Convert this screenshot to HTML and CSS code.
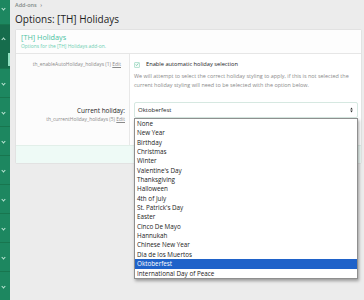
FILE: index.html
```html
<!DOCTYPE html>
<html>
<head>
<meta charset="utf-8">
<link rel="stylesheet" href="styles.css">
</head>
<body>
<div class="app">
  <nav class="side">
    <div class="nav-item first"><span class="chev down"></span></div>
    <div class="nav-item active"><span class="chev up"></span><span class="mark"></span></div>
    <div class="nav-item"><span class="chev down"></span></div>
    <div class="nav-item"><span class="chev down"></span></div>
    <div class="nav-item"><span class="chev down"></span></div>
    <div class="nav-item"><span class="chev down"></span></div>
    <div class="nav-item"><span class="chev down"></span></div>
    <div class="nav-item"><span class="chev down"></span></div>
    <div class="nav-item"><span class="chev down"></span></div>
    <div class="nav-item"><span class="chev down"></span></div>
  </nav>
  <main class="main">
    <div class="crumb">Add-ons <span class="sep">›</span></div>
    <h1 class="title">Options: [TH] Holidays</h1>
    <section class="panel">
      <header class="panel-head">
        <h2 class="panel-title">[TH] Holidays</h2>
        <p class="panel-desc">Options for the [TH] Holidays add-on.</p>
      </header>
      <div class="row row-first">
        <div class="lab">
          <span class="meta">th_enableAutoHoliday_holidays (1) <span class="edit">Edit</span></span>
        </div>
        <div class="ctrl">
          <div class="check-line">
            <span class="box"><svg viewBox="0 0 8 8" width="6" height="6"><path d="M1.2 4.2 L3.2 6 L6.8 1.8" fill="none" stroke="#4fb894" stroke-width="1.2"/></svg></span>
            <span class="check-label">Enable automatic holiday selection</span>
          </div>
          <p class="hint">We will attempt to select the correct holiday styling to apply, if this is not selected the current holiday styling will need to be selected with the option below.</p>
        </div>
      </div>
      <div class="row row-second">
        <div class="lab">
          <span class="label">Current holiday:</span>
          <span class="meta">th_currentHoliday_holidays (5) <span class="edit">Edit</span></span>
        </div>
        <div class="ctrl">
          <div class="select">
            <span>Oktoberfest</span>
            <svg class="arrows" viewBox="0 0 4 8" width="3" height="6"><path d="M0.3 3.2 L2 0.6 L3.7 3.2 Z M0.3 4.8 L2 7.4 L3.7 4.8 Z" fill="#333"/></svg>
          </div>
          <ul class="dropdown">
            <li>None</li>
            <li>New Year</li>
            <li>Birthday</li>
            <li>Christmas</li>
            <li>Winter</li>
            <li>Valentine's Day</li>
            <li>Thanksgiving</li>
            <li>Halloween</li>
            <li>4th of July</li>
            <li>St. Patrick's Day</li>
            <li>Easter</li>
            <li>Cinco De Mayo</li>
            <li>Hannukah</li>
            <li>Chinese New Year</li>
            <li>Dia de los Muertos</li>
            <li class="sel">Oktoberfest</li>
            <li>International Day of Peace</li>
          </ul>
        </div>
      </div>
      <footer class="panel-foot"></footer>
    </section>
  </main>
</div>
</body>
</html>
```
FILE: styles.css
```css
* { box-sizing: border-box; }
html, body { margin: 0; padding: 0; }
body {
  background: #ececec;
  font-family: "Open Sans", "Noto Sans", sans-serif;
  color: #141414;
  width: 364px;
  height: 300px;
  overflow: hidden;
}
.app { display: flex; height: 300px; }
.side {
  width: 10px;
  flex: none;
  background: #1d8760;
  display: flex;
  flex-direction: column;
}
.nav-item {
  position: relative;
  height: 29px;
  border-bottom: 1px solid #18764f;
  display: flex;
  align-items: center;
  flex: none;
}
.nav-item.first { height: 25px; align-items: flex-start; padding-top: 7px; }
.nav-item.active {
  height: 44px;
  background: #166c4c;
  align-items: flex-start;
  padding-top: 12px;
}
.chev {
  display: block;
  width: 3px;
  height: 3px;
  margin-left: 2px;
  border-right: 1px solid #bfe6d6;
  border-bottom: 1px solid #bfe6d6;
  transform: rotate(45deg);
}
.chev.up { transform: rotate(-135deg); margin-top: 1px; }
.mark {
  position: absolute;
  right: 0;
  top: 28px;
  width: 2px;
  height: 13px;
  background: #8fe0c0;
}
.main {
  flex: 1;
  padding: 2px 2px 0 5px;
}
.crumb {
  font-size: 5.5px;
  line-height: 7px;
  color: #7f8a86;
  font-weight: 600;
}
.crumb .sep { margin-left: 2px; }
.title {
  margin: 1px 0 0;
  font-size: 10px;
  line-height: 19px;
  font-weight: 400;
  color: #1c1c1c;
}
.panel {
  margin-top: 0;
  background: #fff;
  border: 1px solid #e2e2e2;
  border-radius: 2px;
}
.panel-head {
  padding: 2px 5px 4px;
  border-bottom: 1px solid #e6e6e6;
  background: #fdfdfd;
  height: 24px;
}
.panel-title {
  margin: 0;
  font-size: 7.3px;
  line-height: 11px;
  font-weight: 400;
  color: #4cc3a1;
}
.panel-desc {
  margin: 0;
  font-size: 4.9px;
  line-height: 7px;
  color: #6ccfb2;
}
.row { display: flex; }
.lab {
  width: 114px;
  flex: none;
  background: #fcfcfc;
  border-right: 1px solid #e8e8e8;
  text-align: right;
  padding-right: 8px;
  display: flex;
  flex-direction: column;
  align-items: flex-end;
}
.row-first { height: 46px; }
.row-first .lab { padding-top: 7px; }
.row-second { height: 45px; }
.row-second .lab { padding-top: 6px; padding-right: 4px; }
.meta {
  font-size: 4.9px;
  line-height: 7px;
  color: #8a8a8a;
  white-space: nowrap;
}
.edit { text-decoration: underline; }
.label {
  font-size: 6.4px;
  line-height: 10px;
  color: #1c1c1c;
}
.ctrl {
  flex: 1;
  padding-left: 4px;
  padding-right: 3px;
  position: relative;
}
.row-first .ctrl { padding-top: 7px; padding-right: 1px; }
.check-line { display: flex; align-items: center; height: 7px; }
.box {
  width: 6px;
  height: 6px;
  border: 1px solid #b9e3d3;
  border-radius: 1px;
  background: #f4fbf8;
  display: flex;
  align-items: center;
  justify-content: center;
  margin-right: 6px;
}
.box svg { width: 5px; height: 5px; }
.check-label { font-size: 5.7px; line-height: 7px; color: #1c1c1c; white-space: nowrap; }
.hint {
  margin: 4px 0 0;
  font-size: 5.45px;
  line-height: 8.5px;
  color: #8a8a8a;
}
.row-second .ctrl { padding-top: 2px; }
.select {
  height: 16px;
  border: 1px solid #d6e8e1;
  border-radius: 2px;
  background: #fff;
  display: flex;
  align-items: center;
  justify-content: space-between;
  padding: 0 4px 0 3px;
  font-size: 6px;
  color: #1c1c1c;
}
.arrows { display: block; }
.dropdown {
  position: absolute;
  left: 4px;
  right: 3px;
  top: 18px;
  margin: 0;
  padding: 0;
  list-style: none;
  background: #fff;
  border: 1px solid #8f8f8f;
  box-shadow: 1px 2px 3px rgba(0,0,0,0.35);
  z-index: 5;
}
.dropdown li {
  height: 9.35px;
  line-height: 9.35px;
  font-size: 6.3px;
  padding-left: 2px;
  color: #222;
  white-space: nowrap;
}
.dropdown li.sel { background: #1f62c9; color: #fff; }
.panel-foot {
  height: 18px;
  background: #eefaf6;
  border-top: 1px solid #e2efe9;
}
```
